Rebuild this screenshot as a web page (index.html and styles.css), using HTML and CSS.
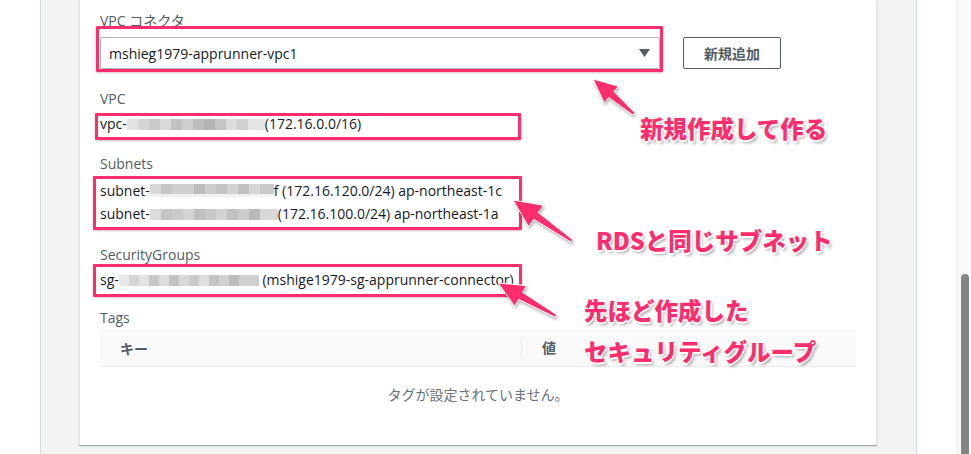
FILE: index.html
```html
<!doctype html>
<html lang="ja">

<head>
  <title>VPC コネクタ</title>
  <meta charset="utf-8">
  <link rel="stylesheet" href="styles.css">
</head>

<body>
  <div class="screen">
    <div class="gutter"></div>

    <main class="content">
      <section class="card">
        <div class="field-label top">VPC コネクタ</div>
        <div class="select-row">
          <div class="select">
            <span>mshieg1979-apprunner-vpc1</span>
            <svg class="caret" width="11" height="8" viewBox="0 0 11 8"><path d="M0 0h11L5.5 8z" /></svg>
          </div>
          <button class="btn">新規追加</button>
        </div>

        <div class="field-label">VPC</div>
        <div class="field-value">vpc-<span class="blur blur-vpc"></span>(172.16.0.0/16)</div>

        <div class="field-label">Subnets</div>
        <div class="field-value list">
          <div>subnet-<span class="blur blur-sub1"></span>f (172.16.120.0/24) ap-northeast-1c</div>
          <div>subnet-<span class="blur blur-sub2"></span>(172.16.100.0/24) ap-northeast-1a</div>
        </div>

        <div class="field-label">SecurityGroups</div>
        <div class="field-value">sg-<span class="blur blur-sg"></span> (mshige1979-sg-apprunner-connector)</div>

        <div class="field-label tags-label">Tags</div>
        <div class="tags-head">
          <div class="col">キー</div>
          <div class="col col-value">値</div>
        </div>
        <div class="empty">タグが設定されていません。</div>
      </section>
    </main>

    <div class="side"></div>
    <div class="scrollbar">
      <div class="thumb"></div>
    </div>
  </div>

  <!-- annotation layer drawn over the screenshot -->
  <div class="notes">
    <div class="mark mark-connector"></div>
    <div class="mark mark-vpc"></div>
    <div class="mark mark-subnets"></div>
    <div class="mark mark-sg"></div>

    <svg class="arrows" width="971" height="454" viewBox="0 0 971 454">
      <polygon points="593,79 618.4,86.2 613.9,91.6 635,112.9 633,115.1 608.7,97.6 604.2,103" />
      <polygon points="513,200 543.4,205.3 538.3,212.7 572.9,239.8 571.1,242.2 533.7,219.3 528.6,226.7" />
      <polygon points="498,283 526.5,285.5 522.6,292.4 556.7,314.7 555.3,317.3 518.6,299.4 514.7,306.3" />
    </svg>

    <div class="note note-new">新規作成して作る</div>
    <div class="note note-rds">RDSと同じサブネット</div>
    <div class="note note-sg">先ほど作成した<br>セキュリティグループ</div>
  </div>
</body>

</html>
```

FILE: styles.css
```css
html,
body {
  margin: 0;
  padding: 0;
}

body {
  background: #ffffff;
  font-family: 'Open Sans', 'Noto Sans CJK JP', sans-serif;
  font-size: 14px;
  color: #16191f;
}

.screen {
  display: flex;
  width: 971px;
  height: 454px;
  overflow: hidden;
}

.gutter {
  width: 40px;
  flex-shrink: 0;
}

.content {
  width: 877px;
  flex-shrink: 0;
  box-sizing: border-box;
  background: #f2f3f3;
  border-left: 1px solid #d5dbdb;
  border-right: 1px solid #d5dbdb;
  padding-left: 38px;
}

.side {
  width: 40px;
  flex-shrink: 0;
}

.scrollbar {
  width: 14px;
  flex-shrink: 0;
  border-left: 1px solid #ececec;
  background: #fafafa;
  padding-top: 274px;
  padding-left: 3px;
  box-sizing: border-box;
}

.thumb {
  width: 8px;
  height: 200px;
  border-radius: 4px;
  background: #858585;
}

/* card */

.card {
  width: 798px;
  box-sizing: border-box;
  background: #ffffff;
  padding: 11px 20px 40px;
  border-left: 1px solid #e3e6e6;
  border-right: 1px solid #e3e6e6;
  box-shadow: 0 1px 1px 0 rgba(0, 28, 36, 0.35);
}

.field-label {
  color: #545b64;
  line-height: 20px;
  margin-top: 20px;
}

.field-label.top {
  margin-top: 0;
}

.field-value {
  line-height: 20px;
  margin-top: 5px;
  white-space: nowrap;
}

.field-value.list {
  line-height: 23px;
}

.select-row {
  display: flex;
  gap: 23px;
  margin-top: 6px;
}

.select {
  width: 560px;
  height: 32px;
  box-sizing: border-box;
  border: 1px solid #aab7b8;
  border-radius: 2px;
  display: flex;
  align-items: center;
  justify-content: space-between;
  padding: 0 9px 0 8px;
}

.caret {
  fill: #545b64;
}

.btn {
  width: 98px;
  height: 32px;
  border: 1px solid #545b64;
  border-radius: 2px;
  background: #ffffff;
  color: #545b64;
  font-family: inherit;
  font-size: 14px;
  font-weight: bold;
  padding: 0;
}

/* pixelated id */
.blur {
  display: inline-block;
  height: 11px;
  vertical-align: -1px;
}

.blur-vpc {
  width: 138px;
  background: linear-gradient(90deg, #e2e2e2 0 11px, #d4d4d4 11px 22px, #c9c9c9 22px 33px, #dadada 33px 44px, #c2c2c2 44px 55px, #cfcfcf 55px 66px, #bdbdbd 66px 77px, #b4b4b4 77px 88px, #c6c6c6 88px 99px, #dcdcdc 99px 110px, #d0d0d0 110px 121px, #e4e4e4 121px);
}

.blur-sub1 {
  width: 124px;
  height: 13px;
  background:
    linear-gradient(0deg, #f1f1f1 0 3px, transparent 3px),
    linear-gradient(90deg, #d8d8d8 0 11px, #c6c6c6 11px 22px, #cfcfcf 22px 44px, #bcbcbc 44px 55px, #cdcdcd 55px 66px, #c4c4c4 66px 77px, #d2d2d2 77px 88px, #c0c0c0 88px 99px, #d6d6d6 99px 110px, #cacaca 110px);
}

.blur-sub2 {
  width: 128px;
  background: linear-gradient(90deg, #dcdcdc 0 11px, #c4c4c4 11px 22px, #cacaca 22px 33px, #d5d5d5 33px 44px, #bfbfbf 44px 55px, #c8c8c8 55px 66px, #d3d3d3 66px 77px, #c1c1c1 77px 88px, #cccccc 88px 99px, #b9b9b9 99px 110px, #d8d8d8 110px);
}

.blur-sg {
  width: 140px;
  background: linear-gradient(90deg, #e8e8e8 0 10px, #d6d6d6 10px 20px, #e4e4e4 20px 30px, #c8c8c8 30px 40px, #dedede 40px 50px, #c2c2c2 50px 60px, #d9d9d9 60px 70px, #cacaca 70px 80px, #e0e0e0 80px 90px, #c4c4c4 90px 100px, #d2d2d2 100px 110px, #bcbcbc 110px 120px, #cfcfcf 120px);
}

/* tags table */

.tags-label {
  margin-top: 18px;
}

.tags-head {
  display: grid;
  grid-template-columns: 421px 1fr;
  height: 38px;
  margin-top: 1px;
  box-sizing: border-box;
  background: #fafafa;
  border-bottom: 1px solid #eaeded;
  align-items: center;
  color: #545b64;
  font-weight: bold;
}

.col {
  padding-left: 20px;
}

.col-value {
  border-left: 1px solid #eaeded;
  line-height: 18px;
}

.empty {
  margin-top: 18px;
  line-height: 20px;
  text-align: center;
  color: #687078;
}

/* annotations */

.notes {
  position: absolute;
  left: 0;
  top: 0;
  width: 971px;
  height: 454px;
  pointer-events: none;
}

.mark {
  position: absolute;
  border: 3px solid #fe2e6e;
  border-radius: 1px;
  box-shadow: 0 1px 2px rgba(120, 0, 40, 0.25);
}

.mark-connector {
  left: 96px;
  top: 26px;
  width: 561px;
  height: 40px;
}

.mark-vpc {
  left: 95px;
  top: 113px;
  width: 420px;
  height: 21px;
}

.mark-subnets {
  left: 93px;
  top: 176px;
  width: 423px;
  height: 48px;
}

.mark-sg {
  left: 93px;
  top: 264px;
  width: 423px;
  height: 27px;
}

.arrows {
  position: absolute;
  left: 0;
  top: 0;
}

.arrows polygon {
  fill: #fe2e6e;
  stroke: #ffffff;
  stroke-width: 1;
  filter: drop-shadow(1px 2px 1.5px rgba(0, 0, 0, 0.3));
}

.note {
  position: absolute;
  font-family: 'Noto Sans CJK JP', sans-serif;
  font-weight: 900;
  font-size: 23.5px;
  line-height: 24px;
  color: #fe2e6e;
  white-space: nowrap;
  text-shadow:
    1.5px 0 0 #fff, -1.5px 0 0 #fff, 0 1.5px 0 #fff, 0 -1.5px 0 #fff,
    1px 1px 0 #fff, -1px -1px 0 #fff, 1px -1px 0 #fff, -1px 1px 0 #fff,
    2px 3px 3px rgba(0, 0, 0, 0.35);
}

.note-new {
  left: 640px;
  top: 116px;
}

.note-rds {
  left: 596px;
  top: 228px;
}

.note-sg {
  left: 584px;
  top: 290px;
  line-height: 41px;
}
```
